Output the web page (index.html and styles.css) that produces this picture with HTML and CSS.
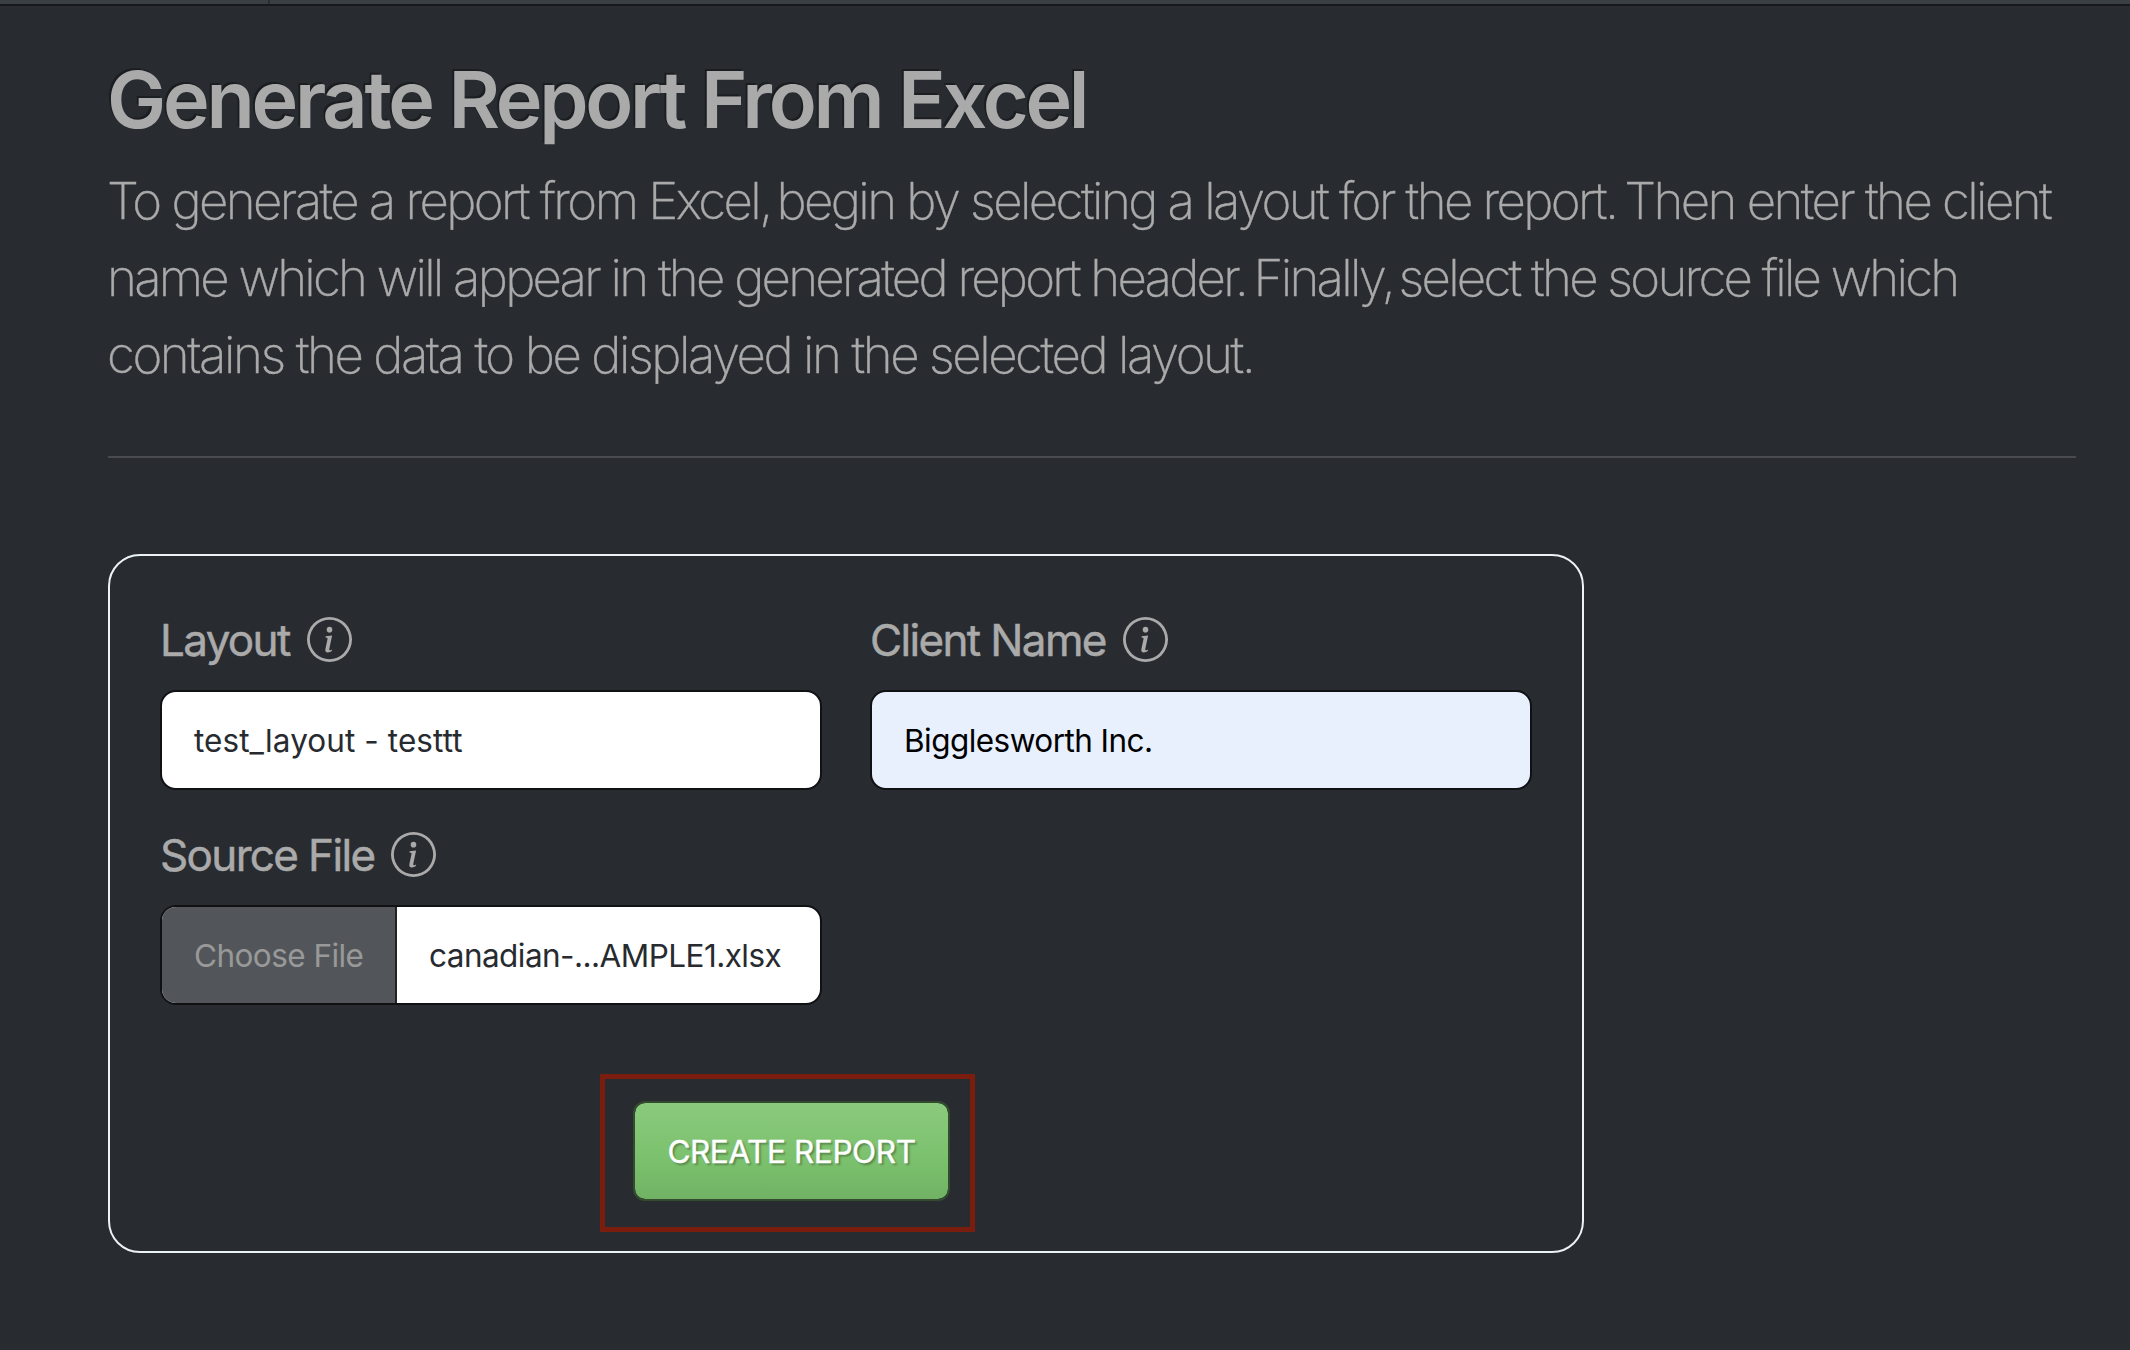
FILE: index.html
```
<!DOCTYPE html>
<html lang="en">
<head>
<meta charset="utf-8">
<title>Generate Report From Excel</title>
<link rel="stylesheet" href="styles.css">
</head>
<body>
<svg class="sprite" aria-hidden="true">
  <symbol id="info" viewBox="0 0 16 16">
    <path d="M8 15A7 7 0 1 1 8 1a7 7 0 0 1 0 14m0 1A8 8 0 1 0 8 0a8 8 0 0 0 0 16"/>
    <path d="m8.93 6.588-2.29.287-.082.38.45.083c.294.07.352.176.288.469l-.738 3.468c-.194.897.105 1.319.808 1.319.545 0 1.178-.252 1.465-.598l.088-.416c-.2.176-.492.246-.686.246-.275 0-.375-.193-.304-.533zM9 4.5a1 1 0 1 1-2 0 1 1 0 0 1 2 0"/>
  </symbol>
</svg>
<header class="navbar"><span class="navbar-brand"></span></header>
<main class="page">
  <h1 class="title">Generate Report From Excel</h1>
  <p class="lead"><span class="line-1">To generate a report from Excel,<span class="tight"> </span>begin by selecting a layout for the report.<span class="snug"> </span>Then enter the client</span><br><span class="line-2">name which will appear in the generated report header.<span class="snug"> </span>Finally,<span class="tight"> </span>select the source file which</span><br><span class="line-3">contains the data to be displayed in the selected layout.</span></p>
  <hr class="rule">
  <form class="card">
    <div class="fields">
      <div class="field">
        <label class="label">Layout<svg class="icon"><use href="#info"/></svg></label>
        <div class="control select">test_layout - testtt</div>
      </div>
      <div class="field">
        <label class="label">Client Name<svg class="icon"><use href="#info"/></svg></label>
        <div class="control autofilled">Bigglesworth Inc.</div>
      </div>
      <div class="field">
        <label class="label">Source File<svg class="icon"><use href="#info"/></svg></label>
        <div class="control file"><span class="choose">Choose File</span><span>canadian-...AMPLE1.xlsx</span></div>
      </div>
    </div>
    <div class="actions">
      <button type="button" class="submit">CREATE REPORT</button>
      <span class="highlight"></span>
    </div>
  </form>
</main>
</body>
</html>
```
FILE: styles.css
```
* { box-sizing: border-box; }
body {
  margin: 0;
  min-height: 1350px;
  background: #282b30;
  color: #aaa;
  font-family: Inter, "Liberation Sans", sans-serif;
}
.sprite { position: absolute; width: 0; height: 0; }
.navbar {
  height: 6px;
  background: #3a3f44;
  border-bottom: 2px solid #17191c;
}
.navbar-brand {
  display: block;
  width: 270px;
  height: 4px;
  border-right: 2px solid #2b2e33;
}
.page { padding: 45px 54px 0 108px; }
.title {
  margin: 0 0 15px -1px;
  font-size: 79px;
  line-height: 96px;
  font-weight: 600;
  letter-spacing: -3.25px;
  text-shadow: -2px -2px 0 rgba(0, 0, 0, .3);
  white-space: nowrap;
}
.lead {
  margin: 0 0 0 -1px;
  font-size: 51px;
  line-height: 77px;
  font-weight: 250;
  -webkit-text-stroke: .4px #aaa;
  white-space: nowrap;
}
.line-1 { letter-spacing: -2.59px; }
.line-2 { letter-spacing: -2.77px; }
.line-3 { letter-spacing: -2.45px; }
.snug { word-spacing: -4px; }
.tight { word-spacing: -6px; }
.rule {
  height: 2px;
  margin: 63px 0 96px;
  border: 0;
  background: #494b4f;
}
.card {
  width: 1476px;
  height: 699px;
  padding: 57px 50px 0;
  border: 2px solid #ecf3f5;
  border-radius: 32px;
}
.fields {
  display: grid;
  grid-template-columns: 662px 662px;
  gap: 38px 48px;
}
.label {
  display: flex;
  align-items: center;
  gap: 17px;
  height: 53px;
  margin-bottom: 24px;
  font-size: 44px;
  letter-spacing: -1.65px;
  -webkit-text-stroke: .5px #aaa;
  white-space: nowrap;
}
.icon { width: 45px; height: 45px; fill: #aaa; }
.control {
  display: flex;
  align-items: center;
  height: 100px;
  padding: 0 32px;
  border: 2px solid #0f1113;
  border-radius: 16px;
  background: #fff;
  color: #272b30;
  font-size: 31.5px;
  letter-spacing: -.55px;
  overflow: hidden;
  white-space: nowrap;
}
.select { letter-spacing: .08px; }
.autofilled { background: #e8f0fe; color: #000; }
.file { padding-left: 0; }
.choose {
  display: flex;
  flex: none;
  align-items: center;
  width: 235px;
  height: 96px;
  margin-right: 32px;
  padding-left: 32px;
  border-right: 2px solid #202327;
  background: #52565a;
  color: #999;
}
.actions {
  position: relative;
  display: flex;
  margin-top: 96px;
  padding-left: 473px;
}
.submit {
  width: 317px;
  height: 100px;
  padding: 0;
  border: 2px solid #344b30;
  border-radius: 12px;
  background: linear-gradient(#8aca7d, #7bc16d 60%, #71b264);
  background-clip: padding-box;
  color: #fff;
  font-family: inherit;
  font-size: 31.5px;
  letter-spacing: -.4px;
  -webkit-text-stroke: .4px #fff;
  text-shadow: 2px 2px 2px rgba(0, 0, 0, .3);
  white-space: nowrap;
}
.highlight {
  position: absolute;
  left: 440px;
  top: -27px;
  width: 375px;
  height: 158px;
  border: 5px solid #7a1d0e;
}
```
